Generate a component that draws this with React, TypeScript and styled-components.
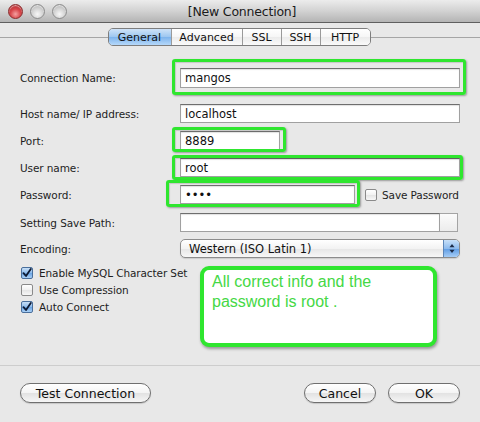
import React from 'react';
import styled, { createGlobalStyle } from 'styled-components';

const Global = createGlobalStyle`
  html, body { margin: 0; padding: 0; background: #e8e8e8; }
  body { font-family: "DejaVu Sans", "Liberation Sans", sans-serif; }
  * { box-sizing: border-box; }
`;

const Window = styled.div`
  width: 480px;
  height: 422px;
  background: #e8e8e8;
  display: flex;
  flex-direction: column;
  overflow: hidden;
`;

const TitleBar = styled.div`
  height: 23px;
  display: grid;
  grid-template-columns: 1fr auto 1fr;
  align-items: center;
  padding-left: 8px;
  background: linear-gradient(#ececec, #d2d2d2 50%, #b4b4b4);
  border-bottom: 1px solid #5f5f5f;
`;

const Lights = styled.div`
  display: flex;
  gap: 7px;
`;

const Light = styled.span<{ $red?: boolean }>`
  width: 15px;
  height: 15px;
  border-radius: 50%;
  border: 1px solid ${p => (p.$red ? '#8a2b2b' : '#8c8c8c')};
  background: ${p =>
    p.$red
      ? 'radial-gradient(circle at 50% 70%, #f4a1a1 0%, #d8474b 45%, #a11f24 100%)'
      : 'radial-gradient(circle at 50% 70%, #f7f7f7 0%, #d2d2d2 50%, #a9a9a9 100%)'};
  box-shadow: inset 0 1px 1px rgba(255,255,255,0.6);
`;

const Title = styled.div`
  font-size: 12.5px;
  color: #1a1a1a;
  letter-spacing: -0.2px;
  margin-left: -4px;
`;

const TabStrip = styled.div`
  position: relative;
  display: flex;
  justify-content: center;
  margin-top: 5px;
  &::before {
    content: '';
    position: absolute;
    left: 0;
    right: 0;
    top: 9px;
    height: 1px;
    background: #a5a5a5;
  }
`;

const Tabs = styled.div`
  position: relative;
  display: flex;
  height: 18px;
  border: 1px solid #7d7d7d;
  border-radius: 5px;
  overflow: hidden;
  margin-left: -2px;
`;

const Tab = styled.div<{ $w: number; $active?: boolean }>`
  width: ${p => p.$w}px;
  display: flex;
  align-items: center;
  justify-content: center;
  font-size: 11px;
  color: #111;
  background: ${p =>
    p.$active
      ? 'linear-gradient(#cfe3f8, #9cc6f0 50%, #7db3ec 51%, #b5d8fa)'
      : 'linear-gradient(#ffffff, #f6f6f6 50%, #ebebeb 51%, #fafafa)'};
  & + & { border-left: 1px solid #9a9a9a; }
`;

const Form = styled.div`
  padding: 22px 20px 0 20px;
  display: flex;
  flex-direction: column;
`;

const Row = styled.div<{ $mt: number }>`
  display: grid;
  grid-template-columns: 160px 1fr;
  align-items: center;
  margin-top: ${p => p.$mt}px;
  height: 19px;
`;

const Label = styled.label`
  font-size: 10.5px;
  letter-spacing: -0.1px;
  color: #1e1e1e;
  white-space: nowrap;
`;

const Controls = styled.div`
  display: flex;
  align-items: center;
`;

const Field = styled.div`
  position: relative;
  display: flex;
`;

const TextInput = styled.input<{ $w: number; $h?: number }>`
  width: ${p => p.$w}px;
  height: ${p => p.$h ?? 19}px;
  border: 1px solid #a0a0a0;
  border-top-color: #6e6e6e;
  background: #fff;
  box-shadow: inset 0 1px 1px rgba(0,0,0,0.12);
  font-family: "DejaVu Sans", "Liberation Sans", sans-serif;
  font-size: 11.5px;
  color: #111;
  padding: 0 4px;
  margin: 0;
  outline: none;
  border-radius: 0;
`;

const Highlight = styled.div<{ $t: number; $r: number; $b: number; $l: number }>`
  position: absolute;
  top: ${p => p.$t}px;
  right: ${p => p.$r}px;
  bottom: ${p => p.$b}px;
  left: ${p => p.$l}px;
  border: 3px solid #2fe62f;
  border-radius: 3px;
  box-shadow: 1px 1px 2px rgba(0,0,0,0.35), inset 1px 1px 1px rgba(0,0,0,0.15);
  pointer-events: none;
`;

const SmallCheck = styled.label`
  display: flex;
  align-items: center;
  gap: 5px;
  font-size: 10.5px;
  letter-spacing: -0.1px;
  color: #1e1e1e;
  margin-left: 10px;
  white-space: nowrap;
`;

const Box = styled.span<{ $checked?: boolean }>`
  width: 12px;
  height: 12px;
  border-radius: 2px;
  border: 1px solid ${p => (p.$checked ? '#4a6f9c' : '#8a8a8a')};
  background: ${p =>
    p.$checked
      ? 'linear-gradient(#c8dff6, #8dbbec 50%, #6aa4e4 51%, #a9cff5)'
      : 'linear-gradient(#ffffff, #f1f1f1 50%, #e4e4e4 51%, #f7f7f7)'};
  display: flex;
  align-items: center;
  justify-content: center;
  flex: none;
`;

const BrowseButton = styled.div`
  width: 18px;
  height: 19px;
  border: 1px solid #a4a4a4;
  border-left: none;
  background: linear-gradient(#fbfbfb, #ececec);
`;

const Select = styled.div`
  width: 280px;
  height: 19px;
  display: flex;
  align-items: center;
  border: 1px solid #8c8c8c;
  border-radius: 5px;
  background: linear-gradient(#ffffff, #f3f3f3 50%, #e6e6e6 51%, #f7f7f7);
  overflow: hidden;
  box-shadow: 0 1px 1px rgba(0,0,0,0.12);
`;

const SelectText = styled.span`
  flex: 1;
  font-size: 11.5px;
  color: #111;
  padding-left: 8px;
`;

const Stepper = styled.span`
  width: 16px;
  height: 100%;
  border-left: 1px solid #5d86b8;
  background: linear-gradient(#c8e0f8, #8dbbee 50%, #5d9be3 51%, #a6cdf6);
  display: flex;
  align-items: center;
  justify-content: center;
`;

const Lower = styled.div`
  display: flex;
  align-items: flex-start;
  margin-top: 6px;
`;

const CheckList = styled.div`
  width: 180px;
  padding-left: 1px;
  display: flex;
  flex-direction: column;
`;

const CheckRow = styled.label`
  display: flex;
  align-items: center;
  gap: 6px;
  height: 17px;
  font-size: 10.5px;
  letter-spacing: -0.1px;
  color: #1e1e1e;
  white-space: nowrap;
`;

const Note = styled.div`
  margin-top: 2px;
  width: 237px;
  height: 81px;
  border: 4px solid #2fe62f;
  border-radius: 9px;
  background: #fff;
  box-shadow: 1px 2px 3px rgba(0,0,0,0.35);
  padding: 2px 0 0 8px;
  font-family: "Liberation Sans", Arial, sans-serif;
  font-size: 16px;
  line-height: 20px;
  color: #45d845;
`;

const Footer = styled.div`
  margin-top: auto;
  height: 57px;
  border-top: 1px solid #cdcdcd;
  display: flex;
  align-items: flex-start;
  padding: 17px 20px 0 20px;
  gap: 12px;
`;

const Spacer = styled.div`
  flex: 1;
`;

const Button = styled.button<{ $w: number }>`
  width: ${p => p.$w}px;
  height: 20px;
  border-radius: 10px;
  border: 1px solid #6f6f6f;
  background: linear-gradient(#ffffff, #f4f4f4 50%, #e2e2e2 51%, #f6f6f6);
  box-shadow: 0 1px 1px rgba(0,0,0,0.15);
  font-family: "DejaVu Sans", "Liberation Sans", sans-serif;
  font-size: 12.5px;
  color: #111;
  padding: 0;
  margin: 0;
`;

const CheckMark = () => (
  <svg width="10" height="10" viewBox="0 0 10 10">
    <path d="M1.5 5.2 L4 8 L8.8 1" fill="none" stroke="#0d1a33" strokeWidth="1.8" strokeLinecap="round" strokeLinejoin="round" />
  </svg>
);

const Arrows = () => (
  <svg width="6" height="11" viewBox="0 0 6 11">
    <path d="M0.5 4.3 L3 1 L5.5 4.3 Z" fill="#1b2a45" />
    <path d="M0.5 6.7 L3 10 L5.5 6.7 Z" fill="#1b2a45" />
  </svg>
);

export default function App() {
  return (
    <>
      <Global />
      <Window>
        <TitleBar>
          <Lights>
            <Light $red />
            <Light />
            <Light />
          </Lights>
          <Title>[New Connection]</Title>
          <span />
        </TitleBar>

        <TabStrip>
          <Tabs>
            <Tab $w={62} $active>General</Tab>
            <Tab $w={71}>Advanced</Tab>
            <Tab $w={39}>SSL</Tab>
            <Tab $w={39}>SSH</Tab>
            <Tab $w={50}>HTTP</Tab>
          </Tabs>
        </TabStrip>

        <Form>
          <Row $mt={0}>
            <Label>Connection Name:</Label>
            <Controls>
              <Field>
                <TextInput $w={280} $h={20} readOnly value="mangos" />
                <Highlight $t={-9} $r={-6} $b={-7} $l={-8} />
              </Field>
            </Controls>
          </Row>
          <Row $mt={17}>
            <Label>Host name/ IP address:</Label>
            <Controls>
              <TextInput $w={280} readOnly value="localhost" />
            </Controls>
          </Row>
          <Row $mt={8}>
            <Label>Port:</Label>
            <Controls>
              <Field>
                <TextInput $w={100} readOnly value="8889" />
                <Highlight $t={-4} $r={-6} $b={-2} $l={-8} />
              </Field>
            </Controls>
          </Row>
          <Row $mt={8}>
            <Label>User name:</Label>
            <Controls>
              <Field>
                <TextInput $w={280} readOnly value="root" />
                <Highlight $t={-3} $r={-3} $b={-3} $l={-8} />
              </Field>
            </Controls>
          </Row>
          <Row $mt={8}>
            <Label>Password:</Label>
            <Controls>
              <Field>
                <TextInput $w={175} type="password" readOnly value="root" />
                <Highlight $t={-5} $r={-5} $b={-3} $l={-14} />
              </Field>
              <SmallCheck>
                <Box />
                Save Password
              </SmallCheck>
            </Controls>
          </Row>
          <Row $mt={9}>
            <Label>Setting Save Path:</Label>
            <Controls>
              <TextInput $w={260} readOnly value="" />
              <BrowseButton />
            </Controls>
          </Row>
          <Row $mt={7}>
            <Label>Encoding:</Label>
            <Controls>
              <Select>
                <SelectText>Western (ISO Latin 1)</SelectText>
                <Stepper>
                  <Arrows />
                </Stepper>
              </Select>
            </Controls>
          </Row>

          <Lower>
            <CheckList>
              <CheckRow>
                <Box $checked><CheckMark /></Box>
                Enable MySQL Character Set
              </CheckRow>
              <CheckRow>
                <Box />
                Use Compression
              </CheckRow>
              <CheckRow>
                <Box $checked><CheckMark /></Box>
                Auto Connect
              </CheckRow>
            </CheckList>
            <Note>
              All correct info and the
              <br />
              password is root .
            </Note>
          </Lower>
        </Form>

        <Footer>
          <Button $w={131}>Test Connection</Button>
          <Spacer />
          <Button $w={72}>Cancel</Button>
          <Button $w={72}>OK</Button>
        </Footer>
      </Window>
    </>
  );
}
